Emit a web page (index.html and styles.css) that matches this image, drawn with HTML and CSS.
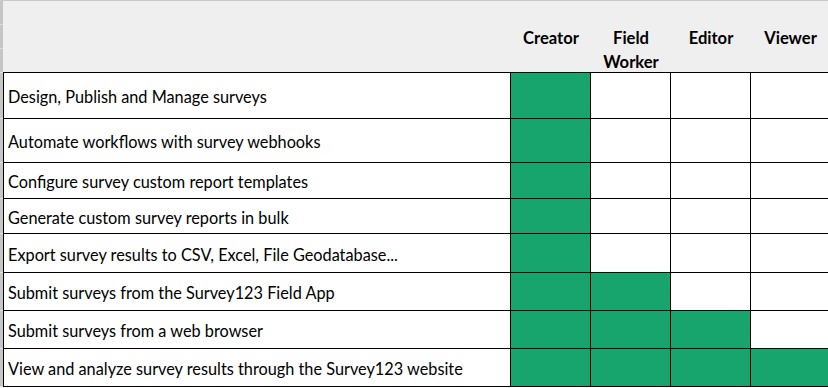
FILE: index.html
```html
<!DOCTYPE html>
<html lang="en">
<head>
<meta charset="utf-8">
<title>Survey123 user types</title>
<link rel="stylesheet" href="styles.css">
</head>
<body>
<div class="sheet">
  <div class="grid">
    <div class="strip strip-head"><span></span><span></span><span></span></div>
    <div class="hcell hlabel"></div>
    <div class="hcell">Creator</div>
    <div class="hcell">Field Worker</div>
    <div class="hcell">Editor</div>
    <div class="hcell hlast">Viewer</div>

    <div class="strip r1"></div>
    <div class="label r1">Design, Publish and Manage surveys</div>
    <div class="c on"></div><div class="c"></div><div class="c"></div><div class="c last"></div>

    <div class="strip r2"></div>
    <div class="label r2">Automate workflows with survey webhooks</div>
    <div class="c on"></div><div class="c"></div><div class="c"></div><div class="c last"></div>

    <div class="strip r3"></div>
    <div class="label r3">Configure survey custom report templates</div>
    <div class="c on"></div><div class="c"></div><div class="c"></div><div class="c last"></div>

    <div class="strip r4"></div>
    <div class="label r4">Generate custom survey reports in bulk</div>
    <div class="c on"></div><div class="c"></div><div class="c"></div><div class="c last"></div>

    <div class="strip r5"></div>
    <div class="label r5">Export survey results to CSV, Excel, File Geodatabase...</div>
    <div class="c on"></div><div class="c"></div><div class="c"></div><div class="c last"></div>

    <div class="strip r6"></div>
    <div class="label r6">Submit surveys from the Survey123 Field App</div>
    <div class="c on"></div><div class="c on"></div><div class="c"></div><div class="c last"></div>

    <div class="strip r7"></div>
    <div class="label r7">Submit surveys from a web browser</div>
    <div class="c on"></div><div class="c on"></div><div class="c on"></div><div class="c last"></div>

    <div class="strip r8"></div>
    <div class="label r8">View and analyze survey results through the Survey123 website</div>
    <div class="c on"></div><div class="c on"></div><div class="c on"></div><div class="c on last"></div>
  </div>
</div>
</body>
</html>
```

FILE: styles.css
```css
html, body {
  margin: 0;
  padding: 0;
  background: #ffffff;
}

.sheet {
  width: 828px;
  height: 388px;
  overflow: hidden;
  border-top: 1px solid #c8c8c8;
  box-sizing: border-box;
  font-family: "Lato", "Open Sans", sans-serif;
  color: #000;
}

.grid {
  display: grid;
  grid-template-columns: 3px 508px 80px 80px 80px 1fr;
  grid-template-rows: 72px 46px 44px 36px 35px 39px 38px 38px 38px;
}

.strip {
  background: #c6c6c6;
  border-bottom: 1px solid #e4e4e4;
  box-sizing: border-box;
}

.strip-head {
  display: flex;
  flex-direction: column;
  border-bottom: 1px solid #e4e4e4;
}

.strip-head span {
  flex: 1;
  border-bottom: 1px solid #dcdcdc;
}

.strip-head span:last-child {
  border-bottom: none;
}

.hcell {
  background: #efefef;
  border-bottom: 1px solid #000;
  box-sizing: border-box;
  padding-top: 24.5px;
  text-align: center;
  font-weight: 700;
  font-size: 16.6px;
  line-height: 24px;
  padding-left: 10px;
  padding-right: 10px;
}

.hcell.hlast {
  padding-left: 2px;
  padding-right: 0;
  text-align: center;
}

.label {
  border-left: 1px solid #000;
  border-right: 1px solid #000;
  border-bottom: 1px solid #000;
  box-sizing: border-box;
  display: flex;
  align-items: center;
  padding: 2px 0 0 4px;
  font-size: 16.3px;
  white-space: nowrap;
}

.c {
  border-right: 1px solid #000;
  border-bottom: 1px solid #000;
  box-sizing: border-box;
  background: #fff;
}

.c.last {
  border-right: none;
}

.c.on {
  background: #17a56d;
}
```
